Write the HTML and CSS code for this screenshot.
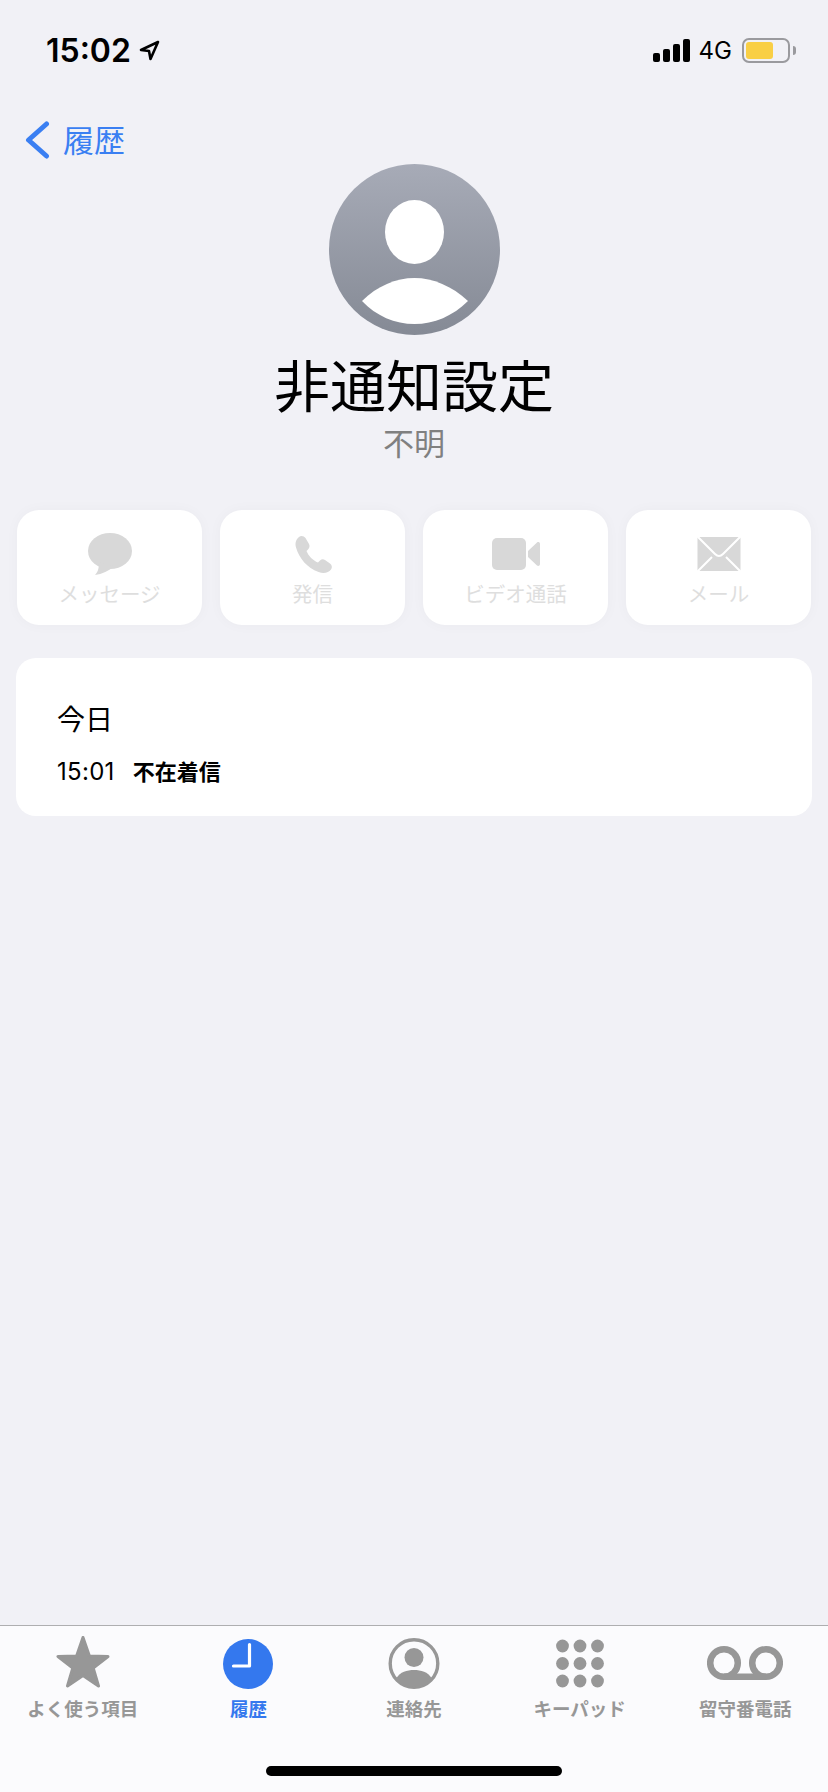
FILE: index.html
```html
<!DOCTYPE html>
<html lang="ja">
<head>
    <meta charset="utf-8" />
    <title>履歴</title>
    <link rel="stylesheet" href="styles.css">
</head>
<body>
<div class="pantalla">
    <div class="estado">
        <div class="estadoIzq">
            <span class="hora">15:02</span>
            <svg class="flecha" width="21" height="21" viewBox="0 0 21 21"><path d="M19 2 L2 10 L10 11 L11.5 19 Z" fill="none" stroke="#000" stroke-width="2.6" stroke-linejoin="round"/></svg>
        </div>
        <div class="estadoDer">
            <svg class="senal" width="37" height="23" viewBox="0 0 37 23"><rect x="0" y="14" width="7" height="9" rx="2"/><rect x="10" y="10" width="7" height="13" rx="2"/><rect x="20" y="5" width="7" height="18" rx="2"/><rect x="30" y="0" width="7" height="23" rx="2"/></svg>
            <span class="red">4G</span>
            <div class="bateria"><div class="carga"></div></div>
            <div class="polo"></div>
        </div>
    </div>

    <div class="nav">
        <svg width="25" height="38" viewBox="0 0 25 38"><path d="M21.5 3 L3.5 19 L21.5 35" fill="none" stroke="#3a7ff2" stroke-width="5" stroke-linecap="round" stroke-linejoin="round"/></svg>
        <span class="atras">履歴</span>
    </div>

    <div class="perfil">
        <svg class="avatar" width="171" height="171" viewBox="0 0 171 171">
            <defs><linearGradient id="gris" x1="0" y1="0" x2="0" y2="1"><stop offset="0" stop-color="#a7abb7"/><stop offset="1" stop-color="#858a95"/></linearGradient></defs>
            <circle cx="85.5" cy="85.5" r="85.5" fill="url(#gris)"/>
            <ellipse cx="85.5" cy="68" rx="29.5" ry="32" fill="#fff"/>
            <path d="M33 137 C48 122 67 114 85.5 114 C104 114 123 122 139 137 C124 152 105 160 85.5 160 C66 160 47 152 33 137 Z" fill="#fff"/>
        </svg>
        <h1 class="nombre">非通知設定</h1>
        <div class="sub">不明</div>
    </div>

    <div class="acciones">
        <div class="boton">
            <svg width="46" height="44" viewBox="0 0 46 44"><ellipse cx="23" cy="19" rx="22" ry="18" fill="#d8d8d8"/><path d="M12 30 C12 36 11 40 8 43 C15 42 22 39 27 34 Z" fill="#d8d8d8"/></svg>
            <span>メッセージ</span>
        </div>
        <div class="boton">
            <svg width="46" height="44" viewBox="0 0 46 44"><path d="M9 5 C11 3 14 4 15.500 6 L19 12 C20 14 19.500 16 18 17.500 L16.500 19 C18.500 24 23 28.500 28 30.500 L30 28.500 C31.500 27 33.500 27 35 28 L40 31.500 C42 33 42.500 35.500 41 37.500 C38.500 41 33.500 42 28.500 40 C17 35.500 9.500 27 6 15.500 C4.800 11 6 7.500 9 5 Z" fill="#d8d8d8"/></svg>
            <span>発信</span>
        </div>
        <div class="boton">
            <svg width="48" height="44" viewBox="0 0 48 44"><rect x="0" y="6" width="34" height="32" rx="5" fill="#d8d8d8"/><path d="M36 19 L45 10.500 C46 9.500 48 10 48 12 L48 32 C48 34 46 34.500 45 33.500 L36 25 Z" fill="#d8d8d8"/></svg>
            <span>ビデオ通話</span>
        </div>
        <div class="boton">
            <svg width="44" height="44" viewBox="0 0 44 44"><rect x="0.500" y="5" width="43" height="34" fill="#d8d8d8"/><path d="M0 4 L18 22 C20.500 24.500 23.500 24.500 26 22 L44 4 M0 40 L15 25 M44 40 L29 25" fill="none" stroke="#fff" stroke-width="2"/></svg>
            <span>メール</span>
        </div>
    </div>

    <div class="tarjeta">
        <div class="dia">今日</div>
        <div class="llamada">
            <span class="horaLlamada">15:01</span>
            <span class="tipo">不在着信</span>
        </div>
    </div>

    <div class="tabbar">
        <div class="tabs">
            <div class="tab">
                <svg width="56" height="54" viewBox="0 0 56 54"><path d="M28 1.500 L34.400 20 L53 20.500 L38.200 32 L43.500 50 L28 39.500 L12.500 50 L17.800 32 L3 20.500 L21.600 20 Z" fill="#979797" stroke="#979797" stroke-width="3" stroke-linejoin="round"/></svg>
                <span>よく使う項目</span>
            </div>
            <div class="tab activo">
                <svg width="56" height="54" viewBox="0 0 56 54"><circle cx="28" cy="28" r="25" fill="#3478ee"/><path d="M29.500 8.500 V30 H13.500" fill="none" stroke="#fff" stroke-width="3.200" stroke-linecap="round" stroke-linejoin="round"/></svg>
                <span>履歴</span>
            </div>
            <div class="tab">
                <svg width="56" height="54" viewBox="0 0 56 54"><circle cx="28" cy="27.500" r="23.800" fill="none" stroke="#979797" stroke-width="3.400"/><circle cx="28" cy="21.500" r="9.500" fill="#979797"/><path d="M10.500 42 C14 36 21 34 28 34 C35 34 42 36 45.500 42 C41 47.500 35 51 28 51 C21 51 15 47.500 10.500 42 Z" fill="#979797"/></svg>
                <span>連絡先</span>
            </div>
            <div class="tab">
                <svg width="56" height="54" viewBox="0 0 56 54"><g fill="#979797"><circle cx="10.500" cy="10" r="6.400"/><circle cx="28" cy="10" r="6.400"/><circle cx="45.500" cy="10" r="6.400"/><circle cx="10.500" cy="27.500" r="6.400"/><circle cx="28" cy="27.500" r="6.400"/><circle cx="45.500" cy="27.500" r="6.400"/><circle cx="10.500" cy="45" r="6.400"/><circle cx="28" cy="45" r="6.400"/><circle cx="45.500" cy="45" r="6.400"/></g></svg>
                <span>キーパッド</span>
            </div>
            <div class="tab">
                <svg width="76" height="54" viewBox="0 0 76 54"><g fill="none" stroke="#979797" stroke-width="6.500"><circle cx="17" cy="27" r="13.800"/><circle cx="59" cy="27" r="13.800"/><path d="M17 40.800 H59"/></g></svg>
                <span>留守番電話</span>
            </div>
        </div>
        <div class="inicio"></div>
    </div>
</div>
</body>
</html>
```

FILE: styles.css
```css
*{
    padding:0px;
    margin:0px;
    box-sizing:border-box;
}
body{
    background:#f1f1f6;
    font-family:"Noto Sans CJK JP","Inter",sans-serif;
}
.pantalla{
    width:828px;
    height:1792px;
    display:flex;
    flex-direction:column;
    overflow:hidden;
}

/* barra de estado */
.estado{
    height:100px;
    display:flex;
    justify-content:space-between;
    align-items:center;
    padding:0 32px 0 46px;
}
.estadoIzq, .estadoDer{
    display:flex;
    align-items:center;
}
.hora{
    font-family:"Inter",sans-serif;
    font-size:32px;
    font-weight:600;
    width:93px;
    color:#000;
}
.senal{
    margin-right:9px;
}
.red{
    font-family:"Inter",sans-serif;
    font-size:24px;
    font-weight:400;
    color:#000;
    margin-right:10px;
}
.bateria{
    width:48px;
    height:25px;
    border:2px solid #9a9a9e;
    border-radius:7px;
    padding:2px;
}
.carga{
    width:27px;
    height:100%;
    background:#f9cf45;
    border-radius:3px;
}
.polo{
    width:3px;
    height:9px;
    margin-left:3px;
    background:#9a9a9e;
    border-radius:0 3px 3px 0;
}

/* volver */
.nav{
    height:48px;
    margin-top:15px;
    margin-bottom:1px;
    padding-left:25px;
    display:flex;
    align-items:center;
    gap:13px;
}
.nav svg{
    margin-top:2px;
}
.atras{
    font-size:31px;
    line-height:48px;
    color:#3a7ff2;
}

/* cabecera del contacto */
.perfil{
    display:flex;
    flex-direction:column;
    align-items:center;
}
.nombre{
    margin-top:16px;
    font-size:56px;
    line-height:64px;
    font-weight:400;
    color:#000;
}
.sub{
    margin-top:7px;
    font-size:31px;
    line-height:40px;
    color:#808080;
}

/* botones */
.acciones{
    margin-top:48px;
    padding:0 17px;
    display:grid;
    grid-template-columns:repeat(4,185px);
    gap:18px;
}
.boton{
    height:115px;
    background:#fff;
    border-radius:22px;
    box-shadow:0 0 14px rgba(0,0,0,0.03);
    display:flex;
    flex-direction:column;
    align-items:center;
    padding-top:22px;
    gap:2px;
}
.boton span{
    font-size:20.500px;
    line-height:30px;
    color:#dedede;
}

/* llamadas */
.tarjeta{
    margin:33px 16px 0 16px;
    height:158px;
    background:#fff;
    border-radius:20px;
    padding:40px 40px 0 41px;
}
.dia{
    font-size:28px;
    line-height:40px;
    color:#000;
}
.llamada{
    margin-top:16px;
    display:flex;
    align-items:baseline;
    gap:18px;
    line-height:32px;
}
.horaLlamada{
    font-family:"Inter",sans-serif;
    font-size:24px;
    letter-spacing:0.3px;
    color:#000;
}
.tipo{
    font-size:22px;
    font-weight:700;
    color:#000;
}

/* barra inferior */
.tabbar{
    margin-top:auto;
    height:167px;
    background:#fbfbfd;
    border-top:1px solid #aeaeb0;
    display:flex;
    flex-direction:column;
    align-items:center;
}
.tabs{
    width:100%;
    display:grid;
    grid-template-columns:repeat(5,1fr);
    padding-top:10px;
}
.tab{
    display:flex;
    flex-direction:column;
    align-items:center;
    gap:5px;
}
.tab span{
    font-size:18.500px;
    line-height:26px;
    font-weight:700;
    color:#979797;
}
.activo span{
    color:#3478ee;
}
.inicio{
    width:296px;
    height:10px;
    margin-top:auto;
    margin-bottom:16px;
    background:#000;
    border-radius:5px;
}
```
